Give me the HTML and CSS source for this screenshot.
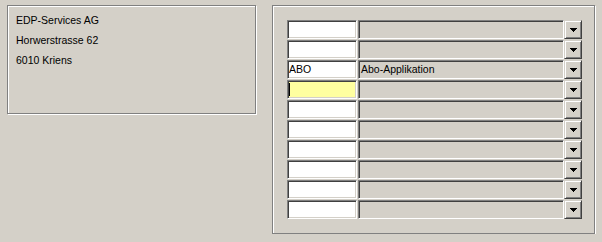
FILE: index.html
```html
<!DOCTYPE html>
<html lang="de">
<head>
    <meta charset="UTF-8">
    <title>Adresse</title>
    <link rel="stylesheet" href="styles.css">
</head>
<body>
    <div class="page">
        <div class="panel address">
            <div class="line">EDP-Services AG</div>
            <div class="line">Horwerstrasse 62</div>
            <div class="line">6010 Kriens</div>
        </div>

        <div class="panel codes">
            <div class="row">
                <div class="field"></div>
                <div class="combo"><div class="combo-text"></div><div class="combo-btn"><svg class="arrow" width="7" height="4" viewBox="0 0 7 4"><path d="M0 0h7v1h-1v1h-1v1h-1v1h-1v-1h-1v-1h-1v-1h-1z"/></svg></div></div>
            </div>
            <div class="row">
                <div class="field"></div>
                <div class="combo"><div class="combo-text"></div><div class="combo-btn"><svg class="arrow" width="7" height="4" viewBox="0 0 7 4"><path d="M0 0h7v1h-1v1h-1v1h-1v1h-1v-1h-1v-1h-1v-1h-1z"/></svg></div></div>
            </div>
            <div class="row">
                <div class="field">ABO</div>
                <div class="combo"><div class="combo-text">Abo-Applikation</div><div class="combo-btn"><svg class="arrow" width="7" height="4" viewBox="0 0 7 4"><path d="M0 0h7v1h-1v1h-1v1h-1v1h-1v-1h-1v-1h-1v-1h-1z"/></svg></div></div>
            </div>
            <div class="row">
                <div class="field active"><span class="caret"></span></div>
                <div class="combo"><div class="combo-text"></div><div class="combo-btn"><svg class="arrow" width="7" height="4" viewBox="0 0 7 4"><path d="M0 0h7v1h-1v1h-1v1h-1v1h-1v-1h-1v-1h-1v-1h-1z"/></svg></div></div>
            </div>
            <div class="row">
                <div class="field"></div>
                <div class="combo"><div class="combo-text"></div><div class="combo-btn"><svg class="arrow" width="7" height="4" viewBox="0 0 7 4"><path d="M0 0h7v1h-1v1h-1v1h-1v1h-1v-1h-1v-1h-1v-1h-1z"/></svg></div></div>
            </div>
            <div class="row">
                <div class="field"></div>
                <div class="combo"><div class="combo-text"></div><div class="combo-btn"><svg class="arrow" width="7" height="4" viewBox="0 0 7 4"><path d="M0 0h7v1h-1v1h-1v1h-1v1h-1v-1h-1v-1h-1v-1h-1z"/></svg></div></div>
            </div>
            <div class="row">
                <div class="field"></div>
                <div class="combo"><div class="combo-text"></div><div class="combo-btn"><svg class="arrow" width="7" height="4" viewBox="0 0 7 4"><path d="M0 0h7v1h-1v1h-1v1h-1v1h-1v-1h-1v-1h-1v-1h-1z"/></svg></div></div>
            </div>
            <div class="row">
                <div class="field"></div>
                <div class="combo"><div class="combo-text"></div><div class="combo-btn"><svg class="arrow" width="7" height="4" viewBox="0 0 7 4"><path d="M0 0h7v1h-1v1h-1v1h-1v1h-1v-1h-1v-1h-1v-1h-1z"/></svg></div></div>
            </div>
            <div class="row">
                <div class="field"></div>
                <div class="combo"><div class="combo-text"></div><div class="combo-btn"><svg class="arrow" width="7" height="4" viewBox="0 0 7 4"><path d="M0 0h7v1h-1v1h-1v1h-1v1h-1v-1h-1v-1h-1v-1h-1z"/></svg></div></div>
            </div>
            <div class="row">
                <div class="field"></div>
                <div class="combo"><div class="combo-text"></div><div class="combo-btn"><svg class="arrow" width="7" height="4" viewBox="0 0 7 4"><path d="M0 0h7v1h-1v1h-1v1h-1v1h-1v-1h-1v-1h-1v-1h-1z"/></svg></div></div>
            </div>
        </div>
    </div>
</body>
</html>
```

FILE: styles.css
```css
* {
    box-sizing: border-box;
}
body {
    margin: 0;
    background-color: #d4d0c8;
    font-family: 'Liberation Sans', Arial, sans-serif;
    font-size: 10.5px;
    color: #000;
}
.page {
    display: flex;
    align-items: flex-start;
    padding: 5px 0 0 7px;
}
/* etched frame */
.panel {
    border: 1px solid #808080;
    box-shadow: inset 1px 1px 0 #fff, 1px 1px 0 #fff;
}
.address {
    width: 249px;
    height: 109px;
    padding: 4px 8px 0;
}
.address .line {
    line-height: 20px;
    height: 20px;
}
.codes {
    width: 323px;
    height: 229px;
    margin-left: 16px;
    padding: 14px 0 0 14px;
    display: flex;
    flex-direction: column;
    gap: 1px;
}
.row {
    display: flex;
    gap: 1px;
    height: 19px;
}
/* sunken edit field */
.field, .combo-text {
    border: 1px solid;
    border-color: #808080 #fff #fff #808080;
    box-shadow: inset 1px 1px 0 #404040, inset -1px -1px 0 #d4d0c8;
    padding: 1px 1px 0 1px;
    line-height: 15px;
    white-space: nowrap;
    overflow: hidden;
}
.field {
    width: 70px;
    background-color: #fff;
}
.field.active {
    background-color: #ffffa0;
    position: relative;
}
.caret {
    position: absolute;
    left: 1px;
    top: 2px;
    width: 1px;
    height: 13px;
    background-color: #000;
}
.combo {
    width: 224px;
    display: flex;
}
.combo-text {
    flex: 1;
    background-color: #d4d0c8;
    padding-left: 2px;
}
/* raised drop-down button */
.combo-btn {
    width: 18px;
    background-color: #d4d0c8;
    border: 1px solid;
    border-color: #d4d0c8 #404040 #404040 #d4d0c8;
    box-shadow: inset 1px 1px 0 #fff, inset -1px -1px 0 #808080;
    display: flex;
    align-items: center;
    justify-content: center;
}
.arrow {
    display: block;
    margin-top: 1px;
    fill: #000;
    shape-rendering: crispEdges;
}
```
